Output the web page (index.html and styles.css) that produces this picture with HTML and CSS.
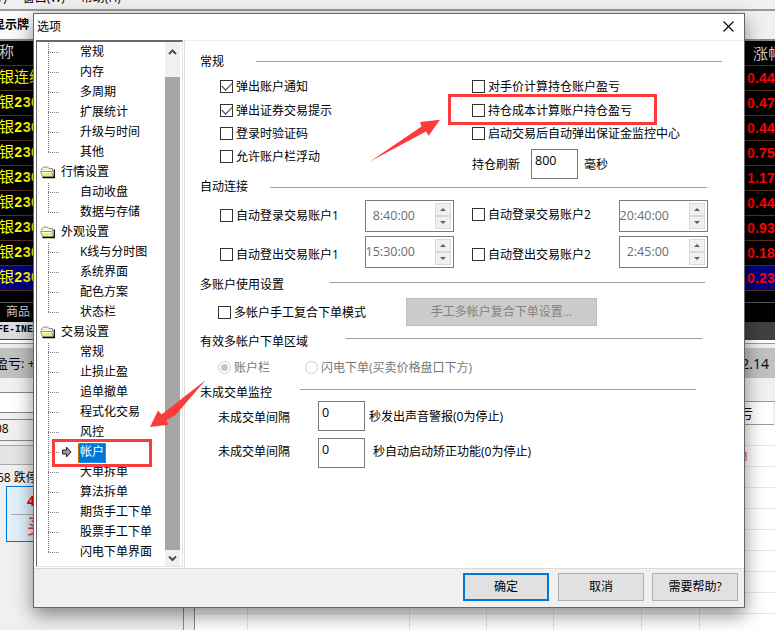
FILE: index.html
```html
<!DOCTYPE html>
<html lang="zh-CN">
<head>
  <meta charset="UTF-8">
  <meta name="viewport" content="width=device-width, initial-scale=1.0">
  <title>选项</title>
  <link rel="stylesheet" href="styles.css">
</head>
<body>
  <!-- Trading window behind the dialog -->
  <div class="app">
    <div class="menubar"><span>(T)</span><span>窗口(W)</span><span>帮助(H)</span></div>
    <div class="tabs"><div class="tab">显示牌</div></div>
    <div class="quotes">
      <div class="quote quote-head"><span>名称</span><span class="change">涨幅</span></div>
      <div class="quote"><span>沪银连续</span><b class="change">0.44</b></div>
      <div class="quote"><span>沪银<b>2301</b></span><b class="change">0.47</b></div>
      <div class="quote"><span>沪银<b>2302</b></span><b class="change">0.44</b></div>
      <div class="quote"><span>沪银<b>2303</b></span><b class="change">0.75</b></div>
      <div class="quote"><span>沪银<b>2304</b></span><b class="change">1.17</b></div>
      <div class="quote"><span>沪银<b>2305</b></span><b class="change">0.44</b></div>
      <div class="quote"><span>沪银<b>2306</b></span><b class="change">0.93</b></div>
      <div class="quote"><span>沪银<b>2307</b></span><b class="change">0.18</b></div>
      <div class="quote quote-active"><span>沪银<b>2308</b></span><b class="change">0.23</b></div>
      <div class="quote-gap"></div>
      <div class="market-tabs">商品</div>
      <div class="exchange"><span>FE-INE</span></div>
    </div>
    <div class="summary"><span>盈亏: +</span><span class="summary-value">2.14</span></div>
    <div class="lower">
      <div class="order">
        <div class="order-list"></div>
        <div class="order-field">08</div>
        <div class="order-bar"></div>
        <div class="order-limit">68 跌停</div>
        <div class="buy"><b>4</b><span>买</span></div>
      </div>
      <div class="positions">
        <div class="pos-tools"></div>
        <div class="pos-head">亏</div>
        <div class="pos-grid">
          <div class="pos-row"></div>
          <div class="pos-row">1</div>
          <div class="pos-row"></div>
          <div class="pos-row"></div>
          <div class="pos-row"></div>
          <div class="pos-row"></div>
          <div class="pos-row"></div>
          <div class="pos-row"></div>
          <div class="pos-row"></div>
          <div class="pos-cols"><i></i><i></i><i></i><i></i><i></i><i></i></div>
        </div>
      </div>
    </div>
  </div>

  <svg width="0" height="0" class="defs">
    <symbol id="folder" viewBox="0 0 16 14">
      <path d="M1.500 5.500V4L3.500 2h4l1.500 1.500h3.500v3" fill="#f4f4d0" stroke="#8c8c8c"/>
      <path d="M.5 6.500h11l2 5.500h-11z" fill="#f3ef62" stroke="#999"/>
      <path d="M2 7.500h9" stroke="#fff"/>
      <path d="M2.500 12.500h11.800V4.500" fill="none" stroke="#000" stroke-width="1.300"/>
    </symbol>
  </svg>

  <div class="dialog">
    <div class="titlebar">
      <span>选项</span>
      <svg class="close" width="11" height="11" viewBox="0 0 11 11"><path d="M.5.5l10 10M10.500.5l-10 10" stroke="#000" stroke-width="1.100"/></svg>
    </div>

    <div class="main">
      <div class="tree">
        <div class="tree-list">
          <div class="item">常规</div>
          <div class="item">内存</div>
          <div class="item">多周期</div>
          <div class="item">扩展统计</div>
          <div class="item">升级与时间</div>
          <div class="item last">其他</div>
          <div class="group"><svg width="16" height="14"><use href="#folder"/></svg>行情设置</div>
          <div class="item">自动收盘</div>
          <div class="item last">数据与存储</div>
          <div class="group"><svg width="16" height="14"><use href="#folder"/></svg>外观设置</div>
          <div class="item">K线与分时图</div>
          <div class="item">系统界面</div>
          <div class="item">配色方案</div>
          <div class="item last">状态栏</div>
          <div class="group"><svg width="16" height="14"><use href="#folder"/></svg>交易设置</div>
          <div class="item">常规</div>
          <div class="item">止损止盈</div>
          <div class="item">追单撤单</div>
          <div class="item">程式化交易</div>
          <div class="item">风控</div>
          <div class="item current">
            <svg width="10" height="12" viewBox="0 0 10 12"><path d="M.5 4h4V1L9 6l-4.500 5V8h-4z" fill="#999" stroke="#222"/></svg>
            <span>帐户</span>
          </div>
          <div class="item">大单拆单</div>
          <div class="item">算法拆单</div>
          <div class="item">期货手工下单</div>
          <div class="item">股票手工下单</div>
          <div class="item last">闪电下单界面</div>
        </div>
        <div class="scrollbar">
          <svg width="15" height="34" viewBox="0 0 15 34"><path d="M4 11.500 7.500 8l3.500 3.500" fill="none" stroke="#505050" stroke-width="2"/></svg>
          <div class="thumb"></div>
          <svg width="15" height="17" viewBox="0 0 15 17"><path d="M4 6.500 7.500 10 11 6.500" fill="none" stroke="#505050" stroke-width="2"/></svg>
        </div>
      </div>

      <div class="pane">
        <div class="heading general-head">常规<hr></div>
        <div class="general">
          <div>
            <label class="check row-first"><i class="box on"></i>弹出账户通知</label>
            <label class="check"><i class="box on"></i>弹出证券交易提示</label>
            <label class="check"><i class="box"></i>登录时验证码</label>
            <label class="check"><i class="box"></i>允许账户栏浮动</label>
          </div>
          <div>
            <label class="check row-first"><i class="box"></i>对手价计算持仓账户盈亏</label>
            <label class="check"><i class="box"></i>持仓成本计算账户持仓盈亏</label>
            <label class="check"><i class="box"></i>启动交易后自动弹出保证金监控中心</label>
            <div class="refresh">持仓刷新<div class="field">800</div>毫秒</div>
          </div>
        </div>

        <div class="heading connect-head">自动连接<hr></div>
        <div class="connect">
          <label class="check"><i class="box"></i>自动登录交易账户1</label>
          <div class="spin"><span>8:40:00</span><div class="arrows"><i></i><i></i></div></div>
          <label class="check up"><i class="box"></i>自动登录交易账户2</label>
          <div class="spin"><span>20:40:00</span><div class="arrows"><i></i><i></i></div></div>
          <label class="check down"><i class="box"></i>自动登出交易账户1</label>
          <div class="spin"><span>15:30:00</span><div class="arrows"><i></i><i></i></div></div>
          <label class="check down"><i class="box"></i>自动登出交易账户2</label>
          <div class="spin"><span>2:45:00</span><div class="arrows"><i></i><i></i></div></div>
        </div>

        <div class="heading multi-head">多账户使用设置<hr></div>
        <div class="multi">
          <label class="check"><i class="box"></i>多帐户手工复合下单模式</label>
          <div class="btn-disabled">手工多帐户复合下单设置...</div>
        </div>

        <div class="heading area-head">有效多帐户下单区域<hr></div>
        <div class="area">
          <label class="check"><i class="radio on"></i>账户栏</label>
          <label class="check"><i class="radio"></i>闪电下单(买卖价格盘口下方)</label>
        </div>

        <div class="heading watch-head">未成交单监控<hr></div>
        <div class="watch">
          <span>未成交单间隔</span><div class="field">0</div><span class="note">秒发出声音警报(0为停止)</span>
        </div>
        <div class="watch watch-fix">
          <span>未成交单间隔</span><div class="field">0</div><span class="note">秒自动启动矫正功能(0为停止)</span>
        </div>
      </div>
    </div>

    <div class="footer">
      <div class="btn btn-ok">确定</div>
      <div class="btn">取消</div>
      <div class="btn btn-help">需要帮助?</div>
    </div>
  </div>

  <!-- Red callouts -->
  <div class="mark mark-option"></div>
  <div class="mark mark-tree"></div>
  <svg class="pointers" width="775" height="630" viewBox="0 0 775 630">
    <path d="M370 161.500 421.500 126.500 420 122l20-2.300-11.300 16-2.700-4.200z"/>
    <path d="M205.700 380 161.500 414.500 158 410.500 150 427l18.500-2.300-2-4.700 9-5z"/>
  </svg>
</body>
</html>
```
FILE: styles.css
```css
* {
  box-sizing: border-box;
}

body {
  margin: 0;
  width: 775px;
  height: 630px;
  position: relative;
  overflow: hidden;
  background: #f0f0f0;
  color: #000;
  font: 12px/15px "Open Sans", "Noto Sans CJK SC", sans-serif;
  white-space: nowrap;
}

i {
  font-style: normal;
}

.defs {
  position: absolute;
}

/* Background window */
.app {
  height: 630px;
  display: flex;
  flex-direction: column;
}

.menubar {
  height: 11px;
  flex: none;
  display: flex;
  gap: 16px;
  align-items: flex-end;
  padding-bottom: 4px;
  margin-left: -7px;
  overflow: hidden;
  border-bottom: 2px solid #999;
}

.tabs {
  height: 30px;
  flex: none;
  border-bottom: 2px solid #888;
}

.tab {
  width: 34px;
  height: 27px;
  display: flex;
  justify-content: flex-end;
  align-items: center;
  padding-right: 5px;
  background: #fafafa;
  font-weight: bold;
}

.quotes {
  height: 299px;
  flex: none;
  background: #000;
  font: 15px/25px "Liberation Mono", "Noto Sans CJK SC", monospace;
}

.quote {
  height: 25px;
  display: flex;
  justify-content: space-between;
  border-bottom: 1px solid #59301c;
  margin-left: -16px;
  color: #ff0;
  overflow: hidden;
}

.quote b {
  font-size: 14px;
}

.quote .change {
  width: 28px;
  color: #f00;
  font-family: "Liberation Sans", "Noto Sans CJK SC", sans-serif;
  font-size: 14px;
  letter-spacing: 0.2px;
}

.quote-head .change {
  width: 22px;
  color: #ccc;
  font-size: 15px;
}

.quote-head {
  color: #ccc;
}

.quote-active {
  background: #00007d;
}

.quote-gap {
  height: 12px;
  border-bottom: 1px solid #555;
}

.market-tabs {
  height: 19px;
  padding-left: 6px;
  color: #ccc;
  font-size: 12px;
  line-height: 20px;
}

.exchange {
  height: 18px;
  background: #404040;
  font: bold 10px/16px "Liberation Mono", monospace;
}

.exchange span {
  display: block;
  width: 100px;
  height: 17px;
  margin-left: -3px;
  background: #ddd;
}

.summary {
  height: 38px;
  flex: none;
  display: flex;
  justify-content: space-between;
  align-items: center;
  padding: 8px 6px 0 0;
  margin-left: -5px;
  font-size: 13px;
  background: linear-gradient(#fff 0 3px, #999 3px 4px, #eee 4px 8px, #c0c0c0 8px);
}

.summary-value {
  font-size: 14px;
}

.lower {
  flex: 1;
  min-height: 0;
  display: flex;
  gap: 10px;
}

.order {
  width: 184px;
  border-right: 1px solid #888;
}

.order-list {
  height: 21px;
  margin-top: 14px;
  background: #fff;
  border: 1px solid #888;
  border-width: 1px 0;
}

.order-field {
  height: 22px;
  margin-top: 6px;
  text-indent: -5px;
  line-height: 17px;
  border: 1px solid #888;
  border-width: 1px 0;
}

.order-bar {
  height: 20px;
  margin-top: 4px;
  background: #e4e4e4;
  border: 1px solid #aaa;
  border-width: 1px 0;
}

.order-limit {
  margin: 5px 0 0 -3px;
}

.buy {
  width: 90px;
  height: 56px;
  margin: 1px 0 0 6px;
  padding-left: 20px;
  display: flex;
  flex-direction: column;
  background: linear-gradient(#aaa, #aaa) 4px 27px / 80px 1px no-repeat #e1f0fb;
  border: 1px solid #0078d7;
  color: #e00;
  font-size: 14px;
  line-height: 27px;
}

.buy span {
  font: 20px/27px "Liberation Serif", "Noto Sans CJK SC", serif;
  color: #e33;
}

.positions {
  flex: 1;
  background: #fff;
  border-left: 1px solid #888;
}

.pos-tools {
  height: 24px;
  background: #f0f0f0;
  border-bottom: 1px solid #999;
}

.pos-head {
  height: 23px;
  padding: 4px 20px 0 0;
  text-align: right;
  font-size: 13px;
  border-bottom: 1px solid #999;
  border-right: 2px solid #eee;
}

.pos-grid {
  height: 206px;
  position: relative;
  display: flex;
  flex-direction: column;
}

.pos-row {
  height: 21px;
  flex: none;
  padding: 3px 26px 0 0;
  color: #f30;
  text-align: right;
  border-bottom: 1px solid #e6e6e6;
}

/* column rules run down the whole grid */
.pos-cols {
  position: absolute;
  inset: 0;
  display: grid;
  grid-template-columns: 53px 162px 77px 67px 88px 58px;
}

.pos-cols i {
  border-right: 1px solid #e6e6e6;
}

/* Dialog */
.dialog {
  position: absolute;
  left: 33px;
  top: 13px;
  width: 712px;
  height: 595px;
  display: flex;
  flex-direction: column;
  background: #fff;
  border: 1px solid #666;
  box-shadow: 0 7px 18px rgba(0, 0, 0, 0.45);
}

.titlebar {
  height: 26px;
  flex: none;
  display: flex;
  justify-content: space-between;
  align-items: center;
  padding: 0 10px 2px 3px;
}

.main {
  height: 528px;
  flex: none;
  display: flex;
}

.tree {
  width: 147px;
  height: 527px;
  margin-left: 2px;
  display: flex;
  border: 1px solid #e3e3e3;
  border-left: 1px solid #696969;
  border-top: 2px solid #696969;
}

.tree-list {
  width: 128px;
  height: 524px;
  padding-top: 1px;
}

.item,
.group {
  height: 20px;
  display: flex;
  align-items: center;
  padding-bottom: 3px;
}

.item {
  margin-left: 11px;
  padding-left: 32px;
  background:
    repeating-linear-gradient(#777 0 1px, transparent 1px 2px) 0 0 / 1px 100% no-repeat,
    repeating-linear-gradient(90deg, #777 0 1px, transparent 1px 2px) 0 9px / 11px 1px no-repeat;
}

.item.last {
  background-size: 1px 10px, 11px 1px;
}

.group {
  padding-left: 3px;
  gap: 5px;
}

.current {
  padding: 0 0 2px 14px;
  gap: 6px;
}

.current span {
  height: 20px;
  margin-bottom: -1px;
  padding: 0 1px;
  line-height: 16px;
  color: #fff;
  background: #0078d7;
  border: 1px dotted #e08020;
}

.scrollbar {
  width: 15px;
  height: 524px;
  background: #f0f0f0;
}

.scrollbar svg {
  display: block;
}

.scrollbar svg:first-child {
  height: 35px;
}

.thumb {
  height: 473px;
  background: #a6a6a6;
}

.pane {
  flex: 1;
  margin-left: 1px;
  padding: 13px 0 0 15px;
  border-left: 1px solid #ddd;
  border-top: 1px solid #eee;
}

.heading {
  height: 15px;
  display: flex;
}

.heading hr {
  height: 1px;
  margin: 4px 0 0 auto;
  border: 0;
  background: #a0a0a0;
}

.general-head { width: 522px; }
.general-head hr { width: 466px; margin-top: 7px; }

.connect-head { width: 507px; }
.connect-head hr { width: 437px; margin-top: 8px; }

.multi-head { width: 505px; margin-top: 9px; }
.multi-head hr { width: 375px; margin-top: 5px; }

.area-head { width: 502px; margin-top: 8px; }
.area-head hr { width: 356px; }

.watch-head { width: 496px; margin-top: 9px; }
.watch-head hr { width: 396px; }

.check {
  height: 23px;
  display: flex;
  align-items: center;
  gap: 3px;
}

.box {
  width: 13px;
  height: 13px;
  flex: none;
  border: 1px solid #333;
  background: #fff;
}

.box.on::after {
  content: "";
  display: block;
  width: 9px;
  height: 5px;
  margin: 1px 0 0 1px;
  border-left: 1.500px solid #333;
  border-bottom: 1.500px solid #333;
  transform: rotate(-45deg);
}

.general {
  height: 104px;
  margin: 6px 0 0 20px;
  display: grid;
  grid-template-columns: 252px auto;
}

.row-first {
  margin-bottom: 1px;
}

.refresh {
  height: 30px;
  margin-top: 4px;
  display: flex;
  align-items: center;
}

.field {
  width: 47px;
  height: 30px;
  padding: 3px 3px;
  border: 1px solid #7a7a7a;
  font-size: 12.500px;
}

.refresh .field {
  margin: 0 6px 0 11px;
}

.connect {
  margin: 6px 0 0 20px;
  display: grid;
  grid-template-columns: 145px 107px 147px 89px;
  grid-auto-rows: 32px;
  row-gap: 4px;
}

.connect .check {
  height: 31px;
}

.connect .up {
  height: 29px;
}

.connect .down {
  height: 37px;
}

.spin {
  width: 89px;
  height: 32px;
  display: flex;
  justify-content: space-between;
  border: 1px solid #7a7a7a;
  padding: 2px;
  color: #6d6d6d;
}

.spin span {
  width: 47px;
  padding-top: 5px;
  display: flex;
  justify-content: flex-end;
  font-size: 12.500px;
}

.arrows {
  width: 16px;
  display: grid;
  grid-template-rows: 1fr 1fr;
}

.arrows i {
  display: flex;
  align-items: center;
  justify-content: center;
  background: #f0f0f0;
  border: 1px solid #d9d9d9;
}

.arrows i::after {
  content: "";
  border: 3px solid transparent;
  border-top: 0;
  border-bottom-color: #606060;
}

.arrows i + i::after {
  transform: rotate(180deg);
}

.multi {
  height: 28px;
  margin: 6px 0 0 18px;
  display: flex;
  align-items: center;
}

.multi .check {
  width: 188px;
}

.btn-disabled {
  width: 191px;
  height: 28px;
  line-height: 26px;
  text-align: center;
  color: #838383;
  background: #ccc;
  border: 1px solid #bfbfbf;
}

.area {
  height: 20px;
  margin: 8px 0 0 18px;
  display: flex;
  align-items: center;
  color: #777;
}

.area .check:first-child {
  width: 87px;
}

.radio {
  width: 13px;
  height: 13px;
  padding: 2px;
  border: 1px solid #ccc;
  border-radius: 50%;
}

.radio.on::after {
  content: "";
  display: block;
  width: 7px;
  height: 7px;
  border-radius: 50%;
  background: #c4c4c4;
}

.watch-head {
  margin-top: 8px;
}

.watch {
  height: 30px;
  margin: 1px 0 0 18px;
  display: flex;
  align-items: center;
}

.watch .field {
  margin: 0 4px 0 28px;
}

.watch span {
  padding-top: 3px;
}

.watch .note {
  padding-top: 0;
}

.watch-fix {
  margin-top: 7px;
}

.watch-fix .field {
  margin-right: 8px;
}

.watch-fix span,
.watch-fix .note {
  padding: 0 0 4px;
}

.footer {
  flex: 1;
  display: flex;
  justify-content: flex-end;
  gap: 9px;
  padding: 4px 6px 0 0;
  background: #f0f0f0;
  border-top: 1px solid #d9d9d9;
}

.btn {
  width: 86px;
  height: 28px;
  line-height: 26px;
  text-align: center;
  background: #e1e1e1;
  border: 1px solid #adadad;
}

.btn-ok {
  line-height: 24px;
  border: 2px solid #0078d7;
}

.btn-help {
  margin-left: -1px;
}

/* Callouts */
.mark {
  position: absolute;
  border: 3px solid #fc3b3b;
}

.mark-option {
  left: 448px;
  top: 94px;
  width: 209px;
  height: 31px;
}

.mark-tree {
  left: 52px;
  top: 439px;
  width: 100px;
  height: 28px;
}

.pointers {
  position: absolute;
  left: 0;
  top: 0;
  fill: #fc3b3b;
}
```
